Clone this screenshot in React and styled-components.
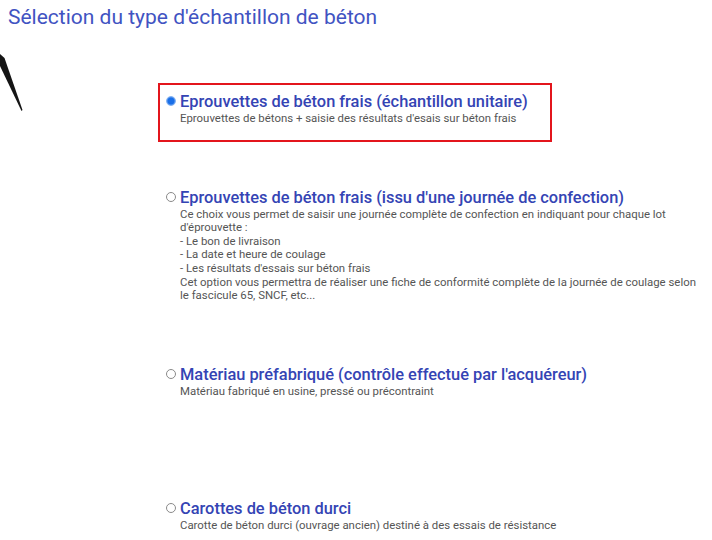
import styled, { createGlobalStyle } from "styled-components";

const GlobalStyle = createGlobalStyle`
  body {
    margin: 0;
    background: #fff;
    font-family: Roboto, "Liberation Sans", Arial, sans-serif;
  }
`;

const options = [
  {
    title: "Eprouvettes de béton frais (échantillon unitaire)",
    lines: ["Eprouvettes de bétons + saisie des résultats d'esais sur béton frais"],
    checked: true,
  },
  {
    title: "Eprouvettes de béton frais (issu d'une journée de confection)",
    lines: [
      "Ce choix vous permet de saisir une journée complète de confection en indiquant pour chaque lot d'éprouvette :",
      "- Le bon de livraison",
      "- La date et heure de coulage",
      "- Les résultats d'essais sur béton frais",
      "Cet option vous permettra de réaliser une fiche de conformité complète de la journée de coulage selon le fascicule 65, SNCF, etc...",
    ],
  },
  {
    title: "Matériau préfabriqué (contrôle effectué par l'acquéreur)",
    lines: ["Matériau fabriqué en usine, pressé ou précontraint"],
    spacing: 76,
  },
  {
    title: "Carottes de béton durci",
    lines: ["Carotte de béton durci (ouvrage ancien) destiné à des essais de résistance"],
  },
];

const App = () => {
  return (
    <Page>
      <GlobalStyle />
      <Heading>Sélection du type d'échantillon de béton</Heading>
      <Stroke viewBox="0 0 24 60" width="24" height="60">
        <path d="M0 0 L4.5 4 L22.5 56 L21.5 57 L0 12 Z" fill="#151515" />
      </Stroke>
      <List>
        {options.map((opt) => (
          <Option key={opt.title} $selected={opt.checked} $spacing={opt.spacing}>
            <Radio $checked={opt.checked} />
            <Body>
              <Title>{opt.title}</Title>
              {opt.lines.map((line) => (
                <Desc key={line}>{line}</Desc>
              ))}
            </Body>
          </Option>
        ))}
      </List>
    </Page>
  );
};

const Page = styled.div`
  position: relative;
  width: 712px;
  height: 540px;
  overflow: hidden;
`;

const Heading = styled.h1`
  margin: 0;
  padding: 5px 8px 0;
  font-size: 21px;
  line-height: 24px;
  font-weight: 400;
  color: #4153c2;
`;

const Stroke = styled.svg`
  position: absolute;
  left: 0;
  top: 54px;
`;

const List = styled.div`
  display: flex;
  flex-direction: column;
  align-items: flex-start;
  width: 580px;
  margin: 54px 0 0 158px;
`;

const Option = styled.label`
  display: flex;
  align-items: flex-start;
  box-sizing: border-box;
  width: ${(p) => (p.$selected ? "394px" : "auto")};
  padding: 7px 8px 14px 6px;
  border: 2px solid ${(p) => (p.$selected ? "#e3151c" : "transparent")};
  margin-bottom: ${(p) => p.$spacing || 37}px;
  cursor: pointer;
`;

const Radio = styled.span`
  flex: none;
  box-sizing: border-box;
  width: 10px;
  height: 10px;
  margin: 4px 4px 0 0;
  border-radius: 50%;
  border: 1px solid ${(p) => (p.$checked ? "#7fb0f2" : "#8a8a8a")};
  background: ${(p) =>
    p.$checked
      ? "radial-gradient(circle, #1a6fe8 0 3.4px, #4d8fee 3.6px)"
      : "#fff"};
`;

const Body = styled.div`
  display: flex;
  flex-direction: column;
  max-width: 522px;
`;

const Title = styled.div`
  font-size: 16.4px;
  line-height: 20px;
  font-weight: 500;
  color: #3444b4;
`;

const Desc = styled.div`
  font-size: 11.4px;
  line-height: 13.6px;
  color: #555;
`;

export default App;
